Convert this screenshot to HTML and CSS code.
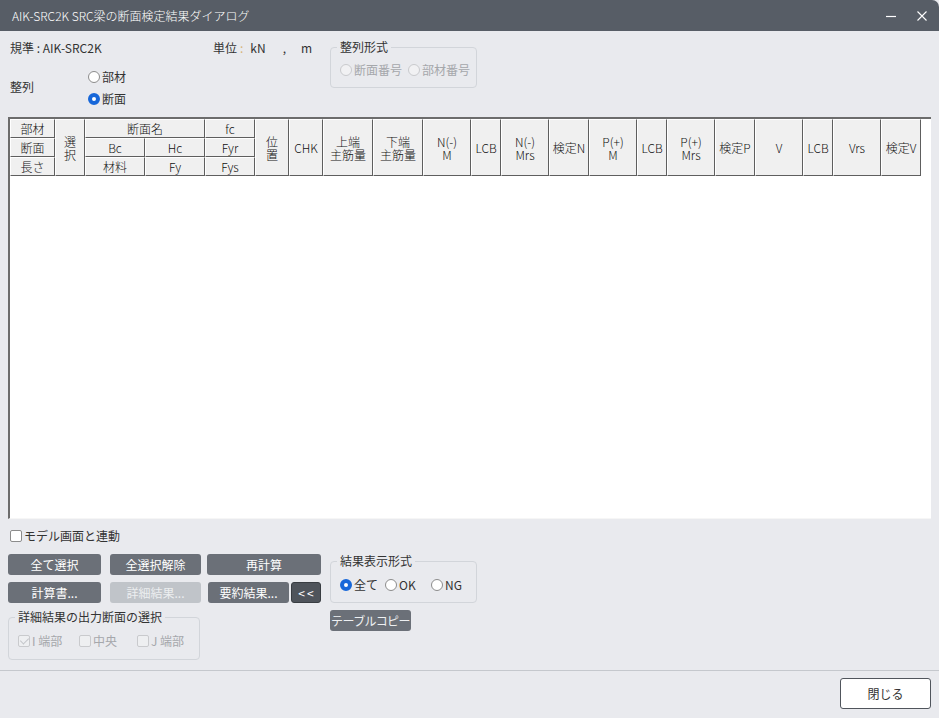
FILE: index.html
```
<!DOCTYPE html>
<html lang="ja">
<head>
    <meta charset="UTF-8">
    <title>AIK-SRC2K SRC梁の断面検定結果ダイアログ</title>
    <link rel="stylesheet" href="styles.css">
</head>
<body>
    <div class="window">
        <div class="titlebar">
            <span class="title">AIK-SRC2K SRC梁の断面検定結果ダイアログ</span>
            <div class="controls">
                <svg width="12" height="12" viewBox="0 0 12 12"><path d="M1 6.5h10" stroke="#fff" stroke-width="1.2"/></svg>
                <svg width="12" height="12" viewBox="0 0 12 12"><path d="M1.5 1.5l9 9M10.5 1.5l-9 9" stroke="#fff" stroke-width="1.1"/></svg>
            </div>
        </div>

        <div class="content">
            <div class="top">
                <div class="top-left">
                    <div class="info-row">
                        <span class="standard">規準 : AIK-SRC2K</span>
                        <span class="units">単位<span class="colon">:</span><span class="unit-kn">kN</span><span class="comma">,</span><span class="unit-m">m</span></span>
                    </div>
                    <div class="sort-row">
                        <span class="sort-label">整列</span>
                        <div class="radio-col">
                            <label class="opt"><span class="radio"></span>部材</label>
                            <label class="opt"><span class="radio on"></span>断面</label>
                        </div>
                    </div>
                </div>
                <fieldset class="group sort-format">
                    <legend>整列形式</legend>
                    <div class="opt-row">
                        <label class="opt off w68"><span class="radio"></span>断面番号</label>
                        <label class="opt off"><span class="radio"></span>部材番号</label>
                    </div>
                </fieldset>
            </div>

            <div class="grid-wrap">
                <table class="grid">
                    <colgroup>
                        <col style="width:45px"><col style="width:30px"><col style="width:60px"><col style="width:60px">
                        <col style="width:50px"><col style="width:34px"><col style="width:34px"><col style="width:50px">
                        <col style="width:50px"><col style="width:48px"><col style="width:30px"><col style="width:48px">
                        <col style="width:40px"><col style="width:48px"><col style="width:30px"><col style="width:48px">
                        <col style="width:40px"><col style="width:48px"><col style="width:30px"><col style="width:48px">
                        <col style="width:40px">
                    </colgroup>
                    <tr>
                        <th>部材</th>
                        <th rowspan="3">選<br>択</th>
                        <th colspan="2">断面名</th>
                        <th>fc</th>
                        <th rowspan="3">位<br>置</th>
                        <th rowspan="3">CHK</th>
                        <th rowspan="3">上端<br>主筋量</th>
                        <th rowspan="3">下端<br>主筋量</th>
                        <th rowspan="3">N(-)<br>M</th>
                        <th rowspan="3">LCB</th>
                        <th rowspan="3">N(-)<br>Mrs</th>
                        <th rowspan="3">検定N</th>
                        <th rowspan="3">P(+)<br>M</th>
                        <th rowspan="3">LCB</th>
                        <th rowspan="3">P(+)<br>Mrs</th>
                        <th rowspan="3">検定P</th>
                        <th rowspan="3">V</th>
                        <th rowspan="3">LCB</th>
                        <th rowspan="3">Vrs</th>
                        <th rowspan="3">検定V</th>
                    </tr>
                    <tr>
                        <th>断面</th>
                        <th>Bc</th>
                        <th>Hc</th>
                        <th>Fyr</th>
                    </tr>
                    <tr>
                        <th>長さ</th>
                        <th>材料</th>
                        <th>Fy</th>
                        <th>Fys</th>
                    </tr>
                </table>
            </div>

            <label class="opt link-opt"><span class="check"></span>モデル画面と連動</label>

            <div class="bottom">
                <div class="bottom-left">
                    <div class="btn-row">
                        <button class="btn w93">全て選択</button>
                        <button class="btn w91 gap9">全選択解除</button>
                        <button class="btn w114 gap6">再計算</button>
                    </div>
                    <div class="btn-row">
                        <button class="btn w93">計算書...</button>
                        <button class="btn w91 gap9" disabled>詳細結果...</button>
                        <button class="btn w81 gap7">要約結果...</button>
                        <button class="btn btn-dark w30 gap2">&lt;&lt;</button>
                    </div>
                    <fieldset class="group detail-out">
                        <legend>詳細結果の出力断面の選択</legend>
                        <div class="opt-row">
                            <label class="opt off w61"><span class="check ticked"></span>I 端部</label>
                            <label class="opt off w58"><span class="check"></span>中央</label>
                            <label class="opt off"><span class="check"></span>J 端部</label>
                        </div>
                    </fieldset>
                </div>
                <div class="bottom-right">
                    <fieldset class="group result-format">
                        <legend>結果表示形式</legend>
                        <div class="opt-row">
                            <label class="opt w45"><span class="radio on"></span>全て</label>
                            <label class="opt w46"><span class="radio"></span>OK</label>
                            <label class="opt"><span class="radio"></span>NG</label>
                        </div>
                    </fieldset>
                    <button class="btn copy-btn">テーブルコピー</button>
                </div>
            </div>
        </div>

        <div class="footer">
            <button class="close-btn">閉じる</button>
        </div>
    </div>
</body>
</html>
```
FILE: styles.css
```
* {
    box-sizing: border-box;
}
body {
    margin: 0;
    background-color: #e9eaee;
    font-family: "Noto Sans CJK JP", "Noto Sans", sans-serif;
    font-size: 12px;
    color: #333;
}
.window {
    width: 939px;
    height: 718px;
    overflow: hidden;
    background-color: #e9eaee;
}
.titlebar {
    height: 31px;
    background-color: #575d66;
    color: #fff;
    display: flex;
    align-items: center;
    justify-content: space-between;
    padding: 0 11px 0 12px;
    border-top-right-radius: 7px;
}
.title {
    font-size: 12px;
    line-height: 14px;
    font-weight: 300;
}
.controls {
    display: flex;
    gap: 19px;
    margin-top: 1px;
}
.content {
    padding: 0 8px;
}

/* top area */
.top {
    height: 86px;
    display: flex;
    padding-top: 9px;
}
.top-left {
    width: 322px;
}
.info-row {
    display: flex;
    height: 16px;
    line-height: 16px;
    padding-left: 2px;
}
.standard {
    width: 203px;
}
.colon {
    color: #d8b57a;
    margin-left: 3px;
}
.unit-kn {
    margin-left: 7px;
}
.comma {
    margin-left: 17px;
}
.unit-m {
    margin-left: 15px;
}
.sort-row {
    display: flex;
    align-items: center;
    margin-top: 10px;
    padding-left: 2px;
}
.sort-label {
    width: 78px;
    margin-top: -4px;
}
.radio-col {
    display: flex;
    flex-direction: column;
}
.radio-col .opt {
    height: 22px;
}

/* options */
.opt {
    display: flex;
    align-items: center;
    height: 16px;
    line-height: 16px;
    color: #333;
    white-space: nowrap;
}
.opt.off {
    color: #a5a7ab;
}
.opt-row {
    display: flex;
    align-items: center;
    height: 22px;
}
.radio {
    width: 12px;
    height: 12px;
    border: 1px solid #8c8c8c;
    border-radius: 50%;
    background-color: #fff;
    margin-right: 2px;
    flex-shrink: 0;
}
.radio.on {
    border: 4px solid #1767d9;
    background-color: #fff;
}
.off .radio {
    border-color: #c9cacd;
    background-color: #f1f1f3;
}
.check {
    position: relative;
    width: 12px;
    height: 12px;
    border: 1px solid #8c8c8c;
    border-radius: 2px;
    background-color: #fff;
    margin-right: 2px;
    flex-shrink: 0;
}
.off .check {
    border-color: #c9cacd;
    background-color: #eeeff1;
}
.check.ticked::after {
    content: "";
    position: absolute;
    left: 3px;
    top: 0px;
    width: 4px;
    height: 7px;
    border: solid #c2c4c8;
    border-width: 0 1.5px 1.5px 0;
    transform: rotate(45deg);
}
.w45 { width: 45px; }
.w46 { width: 46px; }
.w58 { width: 58px; }
.w61 { width: 61px; }
.w68 { width: 68px; }

/* group boxes */
.group {
    margin: 0;
    padding: 0 4px 0 9px;
    border: 1px solid #d2d5da;
    border-radius: 4px;
    min-width: 0;
}
.group legend {
    padding: 0 3px;
    margin-left: -3px;
    line-height: 14px;
    font-size: 12px;
    color: #333;
}
.sort-format {
    width: 147px;
    height: 48px;
    margin-left: 0;
    padding-top: 5px;
}

/* header grid */
.grid-wrap {
    width: 923px;
    height: 402px;
    background-color: #fff;
    border-top: 2px solid #6c6c6c;
    border-left: 2px solid #6c6c6c;
    border-bottom: 1px solid #f6f6f6;
}
.grid {
    table-layout: fixed;
    width: 911px;
    border-collapse: separate;
    border-spacing: 0;
}
.grid tr {
    height: 19px;
}
.grid th {
    padding: 0;
    font-weight: 300;
    font-size: 12px;
    line-height: 13px;
    color: #111;
    background-color: #f0f0f0;
    border-top: 1px solid #fff;
    border-left: 1px solid #fff;
    border-right: 1px solid #5e5e5e;
    border-bottom: 1px solid #5e5e5e;
    text-align: center;
    white-space: nowrap;
    overflow: hidden;
}

/* bottom area */
.link-opt {
    margin: 9px 0 0 2px;
}
.bottom {
    display: flex;
    margin-top: 10px;
}
.bottom-left {
    width: 313px;
}
.btn-row {
    display: flex;
    margin-bottom: 7px;
}
.btn {
    height: 21px;
    padding: 0;
    border: none;
    border-radius: 3px;
    background-color: #6b7078;
    color: #fff;
    font-family: "Noto Sans CJK JP", "Noto Sans", sans-serif;
    font-size: 12px;
    line-height: 21px;
    white-space: nowrap;
}
.btn:disabled {
    background-color: #c0c4c9;
    color: #eceef0;
}
.btn-dark {
    background-color: #4f545b;
    border: 1px solid #393d42;
    line-height: 19px;
    font-size: 12px;
    letter-spacing: 2px;
    padding-left: 2px;
}
.w30 { width: 30px; }
.w81 { width: 81px; }
.w91 { width: 91px; }
.w93 { width: 93px; }
.w114 { width: 114px; }
.gap2 { margin-left: 2px; }
.gap6 { margin-left: 6px; }
.gap7 { margin-left: 7px; }
.gap9 { margin-left: 9px; }
.detail-out {
    width: 192px;
    height: 50px;
    padding-top: 6px;
}
.bottom-right {
    margin-left: 9px;
}
.result-format {
    width: 147px;
    height: 49px;
    padding-top: 6px;
}
.copy-btn {
    display: block;
    width: 81px;
    margin-top: 7px;
    color: #eef0f2;
    letter-spacing: -0.6px;
    overflow: hidden;
}

/* footer */
.footer {
    margin-top: 10px;
    border-top: 1px solid #c5c8cd;
    display: flex;
    justify-content: flex-end;
    padding: 7px 8px 0 0;
}
.close-btn {
    width: 91px;
    height: 31px;
    background-color: #fff;
    border: 1px solid #50555c;
    border-radius: 3px;
    font-family: "Noto Sans CJK JP", "Noto Sans", sans-serif;
    font-size: 12px;
    color: #333;
}
```
